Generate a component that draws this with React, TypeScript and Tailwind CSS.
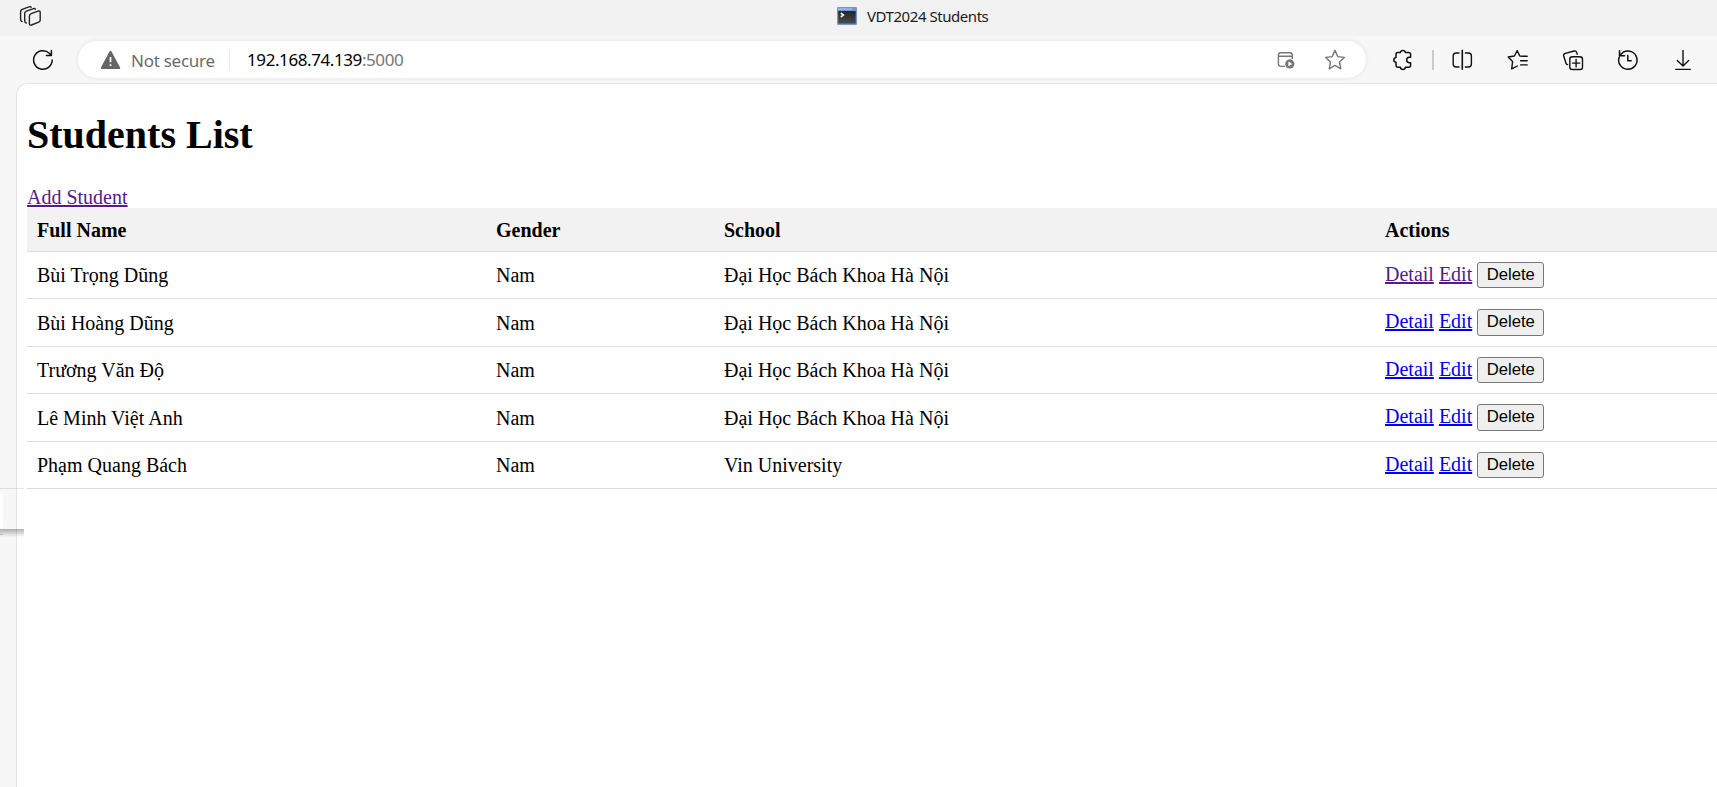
import type { ReactNode } from "react";

type Student = { name: string; gender: string; school: string; visited?: boolean; height: string; button: string };

const SCHOOL = "Đại Học Bách Khoa Hà Nội";

const TALL = "h-[48px] pt-[13px]";
const SHORT = "h-[47px] pt-[12px]";

const students: Student[] = [
  { name: "Bùi Trọng Dũng", gender: "Nam", school: SCHOOL, visited: true, height: SHORT, button: "-mt-px h-[26px]" },
  { name: "Bùi Hoàng Dũng", gender: "Nam", school: SCHOOL, height: TALL, button: "-mt-px h-[27px]" },
  { name: "Trương Văn Độ", gender: "Nam", school: SCHOOL, height: SHORT, button: "-mt-px h-[26px]" },
  { name: "Lê Minh Việt Anh", gender: "Nam", school: SCHOOL, height: TALL, button: "-mt-px h-[27px]" },
  { name: "Phạm Quang Bách", gender: "Nam", school: "Vin University", height: SHORT, button: "-mt-px h-[26px]" },
];

const COLS = "grid grid-cols-[459px_228px_661px_1fr] pl-[10px]";

function Icon({ className = "", children }: { className?: string; children: ReactNode }) {
  return (
    <svg
      viewBox="0 0 24 24"
      width="24"
      height="24"
      fill="none"
      stroke="currentColor"
      strokeWidth="1.4"
      strokeLinecap="round"
      strokeLinejoin="round"
      className={`shrink-0 ${className}`}
    >
      {children}
    </svg>
  );
}

function TitleBar() {
  return (
    <div className="flex h-9 items-start bg-[#f2f2f2]">
      <Icon className="ml-[18px] mt-1 text-[#222]">
        <path d="M13.2 9.6 L20.2 7.1 Q22.2 6.6 22.2 8.4 V16 Q22.2 17.6 20.7 18.2 L13.5 21 Q11.4 21.5 11.4 19.6 V12 Q11.4 10.2 13.2 9.6 Z" />
        <path d="M8.2 19 Q6.7 18.6 6.7 16.8 V9.4 Q6.7 7.7 8.3 7.1 L15.5 4.6 Q17 4.2 17.4 5.2" />
        <path d="M4 17.6 Q2.6 17 2.6 15.5 V7.7 Q2.6 6 4.2 5.4 L11 2.8 Q12.5 2.3 13.2 3.2" />
      </Icon>
      <div className="ml-[795px] mt-[7px] flex items-start">
        <svg width="20" height="18" viewBox="0 0 20 18" className="shrink-0">
          <defs>
            <linearGradient id="term" x1="0" y1="0" x2="0" y2="1">
              <stop offset="0" stopColor="#252525" />
              <stop offset="1" stopColor="#4a4a4a" />
            </linearGradient>
          </defs>
          <rect width="20" height="18" rx="1" fill="#6f98d2" />
          <rect x="1" y="1" width="14" height="2" fill="#8fb2e3" />
          <rect x="16" y="1" width="2.5" height="1.6" fill="#c97a86" />
          <rect x="1.3" y="4" width="17.4" height="12.6" fill="url(#term)" />
          <path d="M3.8 6 L6.4 8 L3.8 10" fill="none" stroke="#f2f2f2" strokeWidth="1.6" />
        </svg>
        <span className="ml-[10px] mt-[-1px] whitespace-nowrap text-[15px] leading-5 tracking-[-0.45px] text-[#1b1b1b]">
          VDT2024 Students
        </span>
      </div>
    </div>
  );
}

function Toolbar() {
  return (
    <div className="flex h-[47px] items-start bg-[#f7f7f7] pt-[5px]">
      <Icon className="ml-[31px] mt-[7px] text-[#111]">
        <path d="M21.2 12 A9.3 9.3 0 1 1 18.3 5.2 L20.2 7.2 M20.4 2.6 V7.6 H15.4" strokeWidth="1.5" />
      </Icon>
      <div className="ml-[23px] flex h-[37px] w-[1288px] shrink-0 items-center rounded-full bg-white shadow-[0_0_5px_rgba(0,0,0,0.09)]">
        <svg width="21" height="20" viewBox="0 0 21 20" className="ml-[22px] shrink-0">
          <path d="M10.5 1.8 L19.2 18 H1.8 Z" fill="#666" stroke="#666" strokeWidth="2" strokeLinejoin="round" />
          <path d="M10.5 7 V12.2 M10.5 14.2 V16" stroke="#fff" strokeWidth="1.7" />
        </svg>
        <span className="ml-[10px] mt-[2px] w-[98px] whitespace-nowrap text-[17px] tracking-[-0.26px] text-[#6b6b6b]">Not secure</span>
        <div className="h-5 w-px bg-[#ededed]" />
        <span className="ml-[17px] whitespace-nowrap text-[17px] tracking-[-0.41px] text-black">
          192.168.74.139<span className="text-[#767676]">:5000</span>
        </span>
        <div className="ml-auto flex items-center pr-[19px] text-[#777]">
          <Icon>
            <path d="M10.5 18.4 H7 Q4.4 18.4 4.4 15.8 V7 Q4.4 4.7 6.8 4.7 H15.6 Q18.3 4.7 18.3 7.2 V10.4 M4.4 8.3 H18.3" />
            <circle cx="15.8" cy="15.9" r="4.6" fill="currentColor" stroke="none" />
            <path d="M14.4 13.6 L18.2 15.9 L14.4 18.2 Z" fill="#fff" stroke="none" />
          </Icon>
          <Icon className="ml-[25px]">
            <path d="M12 2.4 L14.8 8.6 L21.3 9.4 L16.5 14 L17.8 20.8 L12 17.4 L6.2 20.8 L7.5 14 L2.7 9.4 L9.2 8.6 Z" />
          </Icon>
        </div>
      </div>
      <div className="mt-[7px] flex items-center text-[#111]">
        <Icon className="ml-[25px]">
          <path
            strokeWidth="1.5"
            d="M6.8 4.5 H9.4 Q9.7 2.4 11.9 2.4 Q14.1 2.4 14.4 4.5 H17.6 Q19.6 4.5 19.6 6.5 V9.3 H18.1 Q15.7 9.6 15.7 12 Q15.7 14.4 18.1 14.7 H19.6 V17.3 Q19.6 19.3 17.6 19.3 H14.4 Q14.1 21.4 11.9 21.4 Q9.7 21.4 9.4 19.3 H7 Q5 19.3 5 17.3 V14.3 Q2.8 14 2.8 12 Q2.8 10 5 9.6 V6.5 Q5 4.5 6.8 4.5 Z"
          />
        </Icon>
        <div className="ml-[17px] h-5 w-[2px] bg-[#cccccc]" />
        <Icon className="ml-4">
          <path d="M9 19 H6.2 Q3.2 19 3.2 16 V8 Q3.2 5 6.2 5 H9 M15.4 5 H18.4 Q21.4 5 21.4 8 V16 Q21.4 19 18.4 19 H15.4" />
          <path d="M12.3 2.4 V21.2" strokeWidth="1.6" />
        </Icon>
        <Icon className="ml-8">
          <path d="M17.5 8.4 L13.8 8 L11.2 2.6 L8.4 8 L2.2 9 L6.6 13.6 L5.7 20.9 L11.4 18 M14.6 8.3 H21.2 M14.6 12.7 H21.2 M14.6 16.9 H21.2" />
        </Icon>
        <Icon className="ml-[31px]">
          <rect x="8.8" y="8.8" width="12.7" height="12.7" rx="2.6" />
          <path d="M15.1 11.5 V18.8 M11.5 15.1 H18.8 M16.2 6.2 L15.5 4.2 Q15 2.5 13.2 3 L4.2 5.4 Q2.2 6 2.7 8 L5 15.2 Q5.4 16.4 6.6 16.6" />
        </Icon>
        <Icon className="ml-[31px]">
          <path d="M3.2 9 A9.2 9.2 0 1 0 7.2 4.2 L3.6 7.6 M3.5 2.8 V7.8 H8.5 M11.8 7.4 V12.8 H15.2" strokeWidth="1.5" />
        </Icon>
        <Icon className="ml-[31px]">
          <path d="M12 2.4 V17.6 M6.3 12.4 L12 18 L17.7 12.4 M4.8 21.4 H19.2" />
        </Icon>
      </div>
    </div>
  );
}

function StudentRow({ student }: { student: Student }) {
  const link = student.visited ? "text-[#551a8b]" : "text-[#0000ee]";
  const tall = student.height === TALL;
  return (
    <div className={`${COLS} ${student.height} border-b border-[#dddddd]`}>
      <span>{student.name}</span>
      <span>{student.gender}</span>
      <span>{student.school}</span>
      <div className={`flex items-start ${tall ? "-mt-[2px]" : "-mt-px"}`}>
        <a className={`underline ${link}`}>Detail</a>
        <a className={`ml-[5px] underline ${link}`}>Edit</a>
        <button
          className={`ml-[5px] flex w-[67px] items-center justify-center rounded-[3px] border border-[#767676] bg-[#efefef] pb-px font-['Liberation_Sans',sans-serif] text-[16.67px] leading-5 ${student.button}`}
        >
          Delete
        </button>
      </div>
    </div>
  );
}

export default function App() {
  return (
    <div className="relative flex h-[787px] w-[1717px] flex-col overflow-hidden bg-[#f7f7f7] font-['Noto_Sans','Open_Sans',sans-serif]">
      <TitleBar />
      <Toolbar />
      <main className="ml-4 grow rounded-tl-[12px] border-l border-t border-[#e5e5e5] bg-white pl-[10px] font-['Liberation_Serif',serif] text-[20px] leading-[23px] text-black">
        <h1 className="pt-[28px] text-[40px] font-bold leading-[46px]">Students List</h1>
        <div className="mt-[27px] h-[23px] pt-px">
          <a className="text-[#551a8b] underline">Add Student</a>
        </div>
        <div className={`${COLS} h-11 border-b border-[#dddddd] bg-[#f2f2f2] pt-[11px] font-bold`}>
          <span>Full Name</span>
          <span>Gender</span>
          <span>School</span>
          <span>Actions</span>
        </div>
        {students.map((s) => (
          <StudentRow key={s.name} student={s} />
        ))}
      </main>
      <div className="absolute left-0 top-[488px] h-[41px] w-6 border-t border-black/10">
        <div className="mt-[3px] h-9 w-[3px] rounded-r-[4px] bg-white" />
      </div>
      <div className="absolute left-0 top-[529px] h-2 w-6 bg-gradient-to-b from-black/30 to-transparent" />
      <div className="absolute left-0 top-[534px] h-px w-[3px] bg-[#bbbbbb]" />
    </div>
  );
}
